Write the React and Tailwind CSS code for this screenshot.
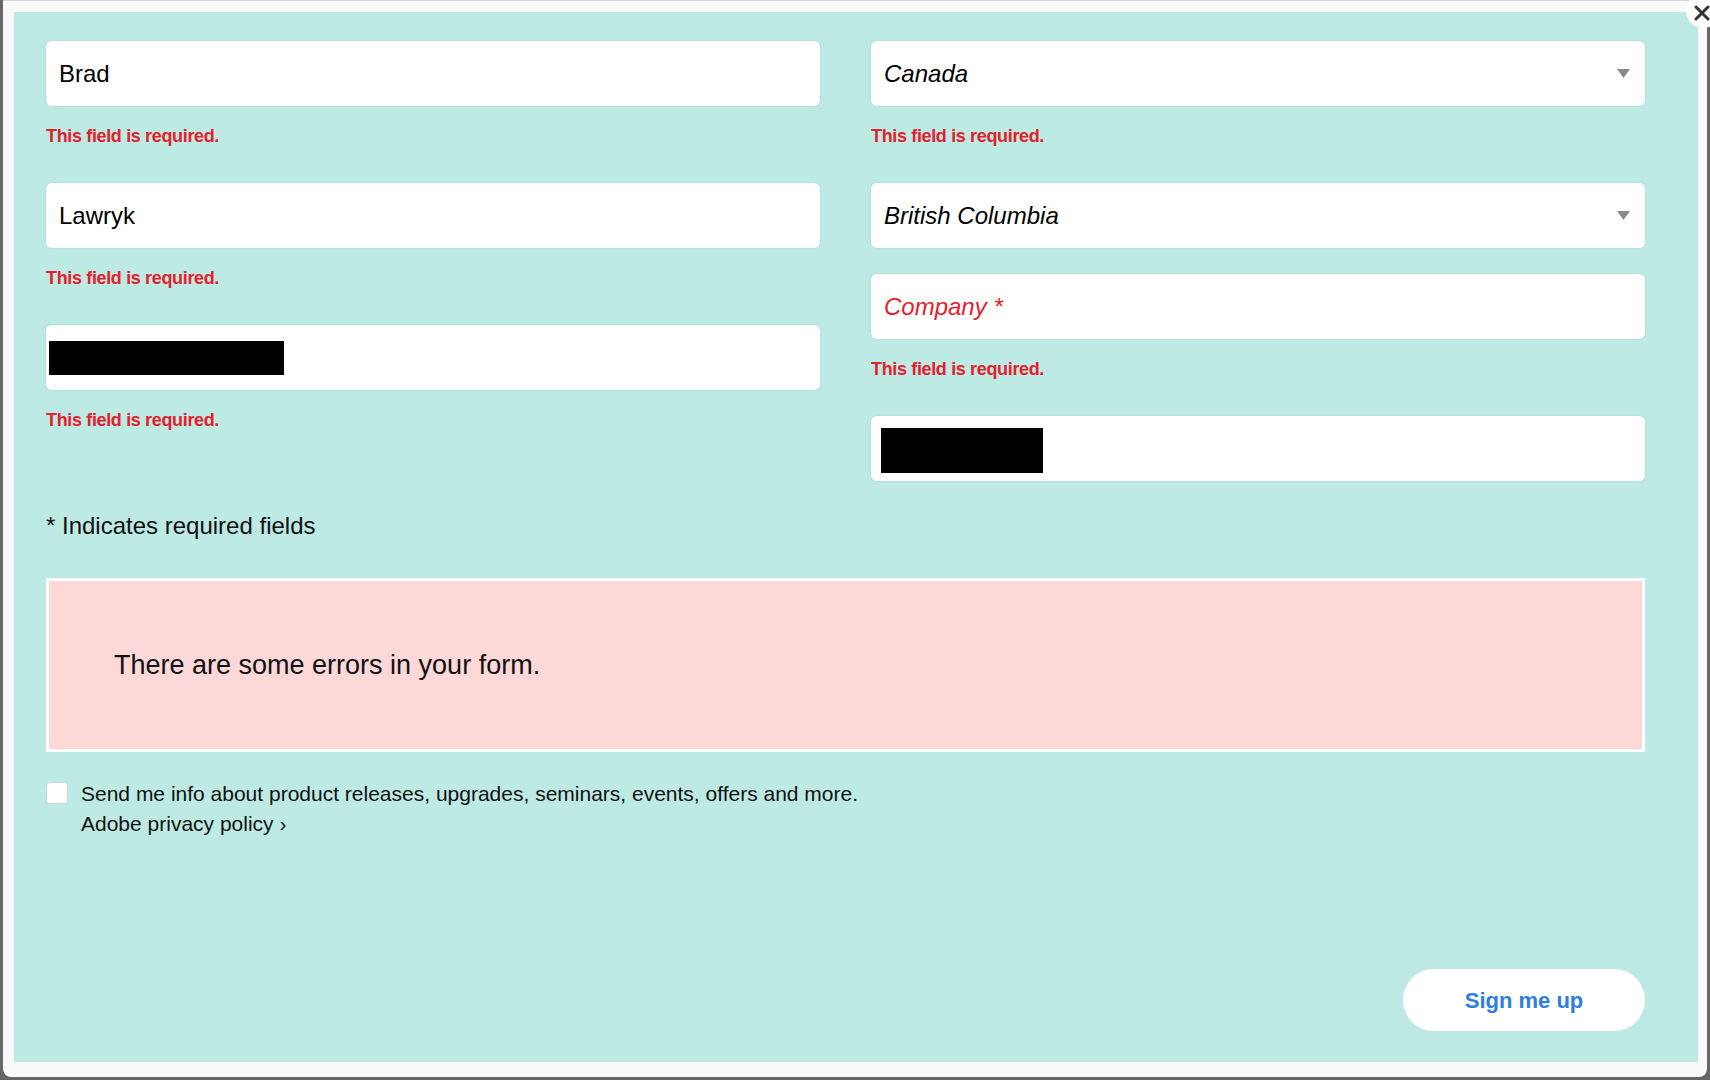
import React from "react";

const font = { fontFamily: '"Liberation Sans", Arial, sans-serif' };

function Caret() {
  return (
    <svg width="13" height="9" viewBox="0 0 13 9" className="absolute right-[15px] top-[28px]">
      <path d="M0 0 H13 L6.5 9 Z" fill="#8a8a8a" />
    </svg>
  );
}

function Field({ children, error, select }) {
  return (
    <div className={error ? "mb-[27px]" : "mb-[26px]"}>
      <div className="relative h-[65px] rounded-[6px] bg-white shadow-[0_0_3px_rgba(0,0,0,0.08)] flex items-center px-[13px]">
        {children}
        {select && <Caret />}
      </div>
      {error && (
        <div className="h-[50px] pt-[19px]">
          <div className="leading-[22px] text-[18px] font-bold tracking-[-0.35px] text-[#e4212c]">
            This field is required.
          </div>
        </div>
      )}
    </div>
  );
}

export default function App() {
  return (
    <div className="relative w-[1710px] h-[1080px] bg-[#666666] px-[3px] overflow-hidden" style={font}>
      <div className="h-[1077px] bg-[#f9f9f9] border-t border-[#d6d6d6] rounded-b-[8px] pt-[11px] pl-[11px] pr-[9px] pb-[15px]">
        <div className="h-full bg-[#bdeae3] flex flex-col pt-[29px] pl-[32px] pr-[53px] pb-[31px] text-black">
          <div className="grid grid-cols-2 gap-x-[51px]">
            <div>
              <Field error>
                <span className="text-[24px]">Brad</span>
              </Field>
              <Field error>
                <span className="text-[24px]">Lawryk</span>
              </Field>
              <Field error>
                <div className="absolute left-[3px] top-[16px] w-[235px] h-[34px] bg-black" />
              </Field>
            </div>
            <div>
              <Field error select>
                <span className="text-[24px] italic">Canada</span>
              </Field>
              <Field select>
                <span className="text-[24px] italic">British Columbia</span>
              </Field>
              <Field error>
                <span className="text-[24px] italic text-[#e4212c]">Company *</span>
              </Field>
              <Field>
                <div className="absolute left-[10px] top-[12px] w-[162px] h-[45px] bg-black" />
              </Field>
            </div>
          </div>

          <div className="leading-[36px] text-[24px] text-[#111] mt-[1px]">* Indicates required fields</div>

          <div className="mt-[34px] h-[174px] border-[3px] border-white bg-[#fcd8d9] flex items-center pl-[65px]">
            <span className="text-[27px] text-[#111]">There are some errors in your form.</span>
          </div>

          <div className="mt-[29px] flex items-start gap-[13px]">
            <div className="w-[22px] h-[22px] rounded-[4px] bg-white border border-[#d4d4d4] mt-[1px] shrink-0" />
            <div className="text-[21px] leading-[30px] text-[#111] -mt-[2px]">
              <div>Send me info about product releases, upgrades, seminars, events, offers and more.</div>
              <div>Adobe privacy policy ›</div>
            </div>
          </div>

          <div className="mt-auto flex justify-end">
            <button className="w-[242px] h-[62px] rounded-full bg-white text-[22px] font-bold text-[#2d7ee3]">
              Sign me up
            </button>
          </div>
        </div>
      </div>

      <div className="absolute left-[1686px] top-[-6px] w-[34px] h-[34px] rounded-full bg-white flex items-center justify-center">
        <svg width="16" height="16" viewBox="0 0 16 16" className="-ml-[2px] mt-[4px]">
          <path d="M2 2 L14 14 M14 2 L2 14" stroke="#333" strokeWidth="3" strokeLinecap="round" />
        </svg>
      </div>
    </div>
  );
}
